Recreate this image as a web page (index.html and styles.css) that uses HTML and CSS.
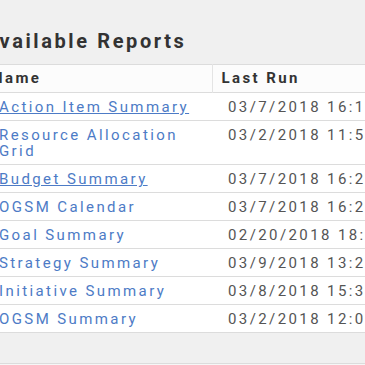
FILE: index.html
```html
<!DOCTYPE html>
<html>
<head>
<meta charset="utf-8">
<link rel="stylesheet" href="styles.css">
</head>
<body>
<div class="page">
  <h2 class="title">Available Reports</h2>
  <table class="reports">
    <thead>
      <tr><th class="c-name">Name</th><th class="c-run">Last Run</th></tr>
    </thead>
    <tbody>
      <tr><td class="c-name"><a class="link under" href="#">Action Item Summary</a></td><td class="c-run">03/7/2018 16:12</td></tr>
      <tr><td class="c-name"><a class="link" href="#">Resource Allocation Grid</a></td><td class="c-run">03/2/2018 11:53</td></tr>
      <tr><td class="c-name"><a class="link under" href="#">Budget Summary</a></td><td class="c-run">03/7/2018 16:24</td></tr>
      <tr><td class="c-name"><a class="link" href="#">OGSM Calendar</a></td><td class="c-run">03/7/2018 16:25</td></tr>
      <tr><td class="c-name"><a class="link" href="#">Goal Summary</a></td><td class="c-run">02/20/2018 18:10</td></tr>
      <tr><td class="c-name"><a class="link" href="#">Strategy Summary</a></td><td class="c-run">03/9/2018 13:22</td></tr>
      <tr><td class="c-name"><a class="link" href="#">Initiative Summary</a></td><td class="c-run">03/8/2018 15:31</td></tr>
      <tr><td class="c-name"><a class="link" href="#">OGSM Summary</a></td><td class="c-run">03/2/2018 12:04</td></tr>
    </tbody>
  </table>
  <div class="footer"></div>
</div>
</body>
</html>
```
FILE: styles.css
```css
html, body {
  margin: 0;
  padding: 0;
}
body {
  background: #f6f6f6;
  font-family: Roboto, "Liberation Sans", sans-serif;
  overflow: hidden;
}
.page {
  margin-left: -17px;
  width: 460px;
  padding-top: 30px;
  background: #f0f0f0;
}
.title {
  margin: 0 0 12px 1px;
  font-size: 20px;
  line-height: 22px;
  font-weight: bold;
  letter-spacing: 2.6px;
  color: #333;
}
.reports {
  width: 100%;
  border-collapse: collapse;
  background: #fff;
  font-size: 15px;
  line-height: 16px;
  letter-spacing: 2.4px;
}
.reports th {
  text-align: left;
  font-weight: bold;
  color: #333;
  padding: 5px 8px 6px 9px;
  border-top: 1px solid #dcdcdc;
  background: #fcfcfc;
}
.reports th.c-name {
  border-right: 1px solid #e4e4e4;
}
.reports td {
  padding: 6px 8px 5px 16px;
  border-top: 1px solid #dcdcdc;
  color: #555;
  vertical-align: top;
}
.reports tbody tr:last-child td {
  border-bottom: 1px solid #dcdcdc;
}
.c-name {
  width: 205px;
}
.link {
  color: #4d7bc6;
  text-decoration: none;
}
.link.under {
  text-decoration: underline;
}
.footer {
  height: 30px;
  border-bottom: 1px solid #dcdcdc;
}
```
